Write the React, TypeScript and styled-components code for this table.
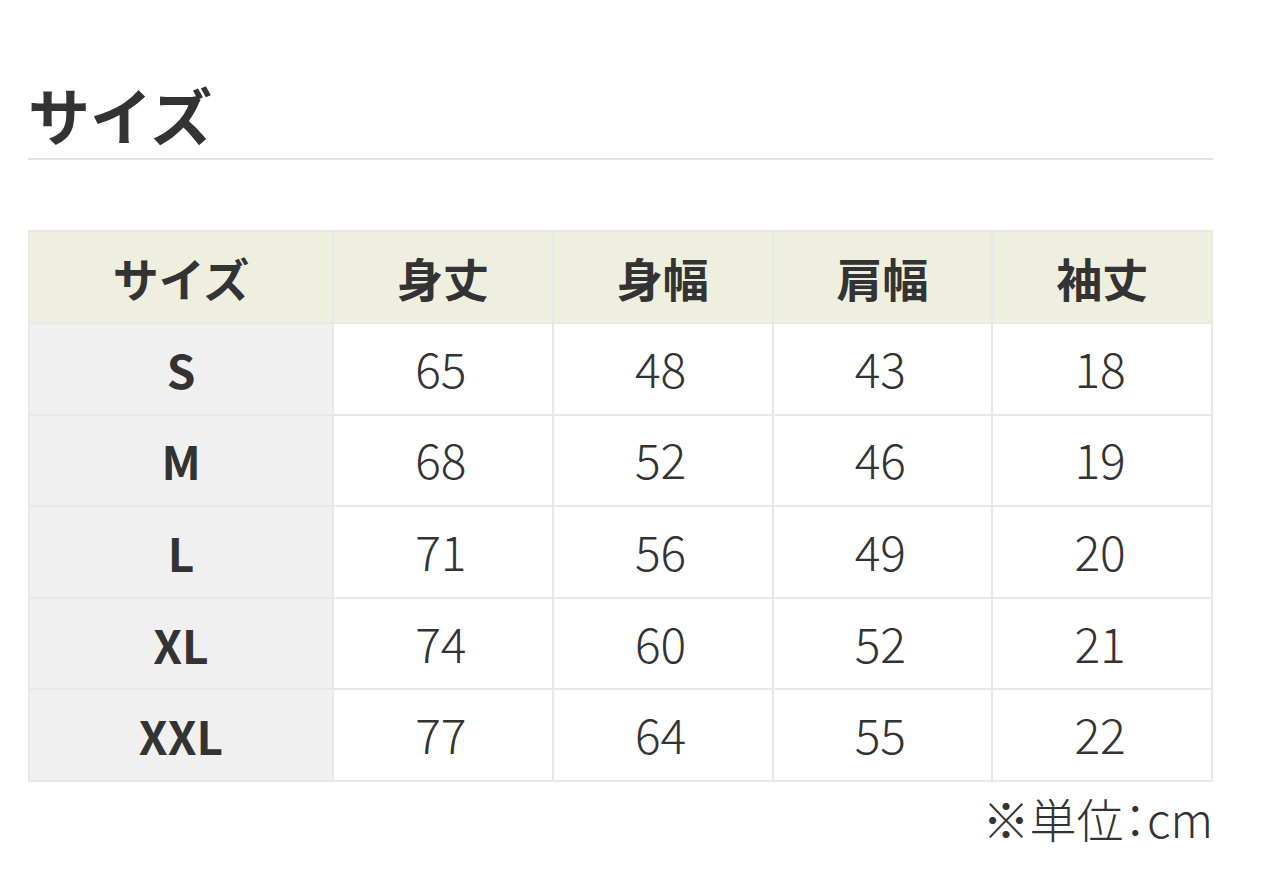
import React from "react";
import styled, { createGlobalStyle } from "styled-components";

const Global = createGlobalStyle`
  html, body { margin: 0; padding: 0; background: #ffffff; }
  body { font-family: "Noto Sans CJK JP", "Noto Sans", sans-serif; color: #333333; }
`;

const Page = styled.div`
  width: 1185px;
  padding: 79px 0 0 28px;
`;

const Heading = styled.h2`
  margin: 0;
  font-size: 62px;
  line-height: 70px;
  font-weight: 700;
  color: #333333;
  padding-bottom: 9px;
  border-bottom: 2px solid #e3e3e3;
`;

const Table = styled.table`
  margin-top: 70px;
  width: 1185px;
  border-collapse: collapse;
  table-layout: fixed;
  border: 2px solid #e8e8e8;
`;

const Row = styled.tr<{ $h: number }>`
  height: ${(p) => p.$h}px;
`;

const HeadCell = styled.th<{ $w?: number }>`
  ${(p) => (p.$w ? `width: ${p.$w}px;` : "")}
  background: #efefe0;
  border: 2px solid #e8e8e8;
  font-size: 46px;
  font-weight: 700;
  color: #333333;
  text-align: center;
  vertical-align: middle;
  padding: 0;
  line-height: 1;
`;

const SizeCell = styled.th`
  background: #f0f0f0;
  border: 2px solid #e8e8e8;
  font-size: 46px;
  font-weight: 700;
  color: #333333;
  text-align: center;
  padding: 0;
  line-height: 1;
`;

const ValueCell = styled.td`
  background: #ffffff;
  border: 2px solid #e8e8e8;
  font-size: 48px;
  font-weight: 300;
  color: #333333;
  text-align: center;
  padding: 0 4px 4px 0;
  line-height: 1;
`;

const Note = styled.p`
  margin: 6px 0 0;
  text-align: right;
  font-size: 47px;
  line-height: 60px;
  font-weight: 300;
  color: #333333;
  font-feature-settings: "palt";
`;

const headers = ["身丈", "身幅", "肩幅", "袖丈"];
const rows: [string, number[]][] = [
  ["S", [65, 48, 43, 18]],
  ["M", [68, 52, 46, 19]],
  ["L", [71, 56, 49, 20]],
  ["XL", [74, 60, 52, 21]],
  ["XXL", [77, 64, 55, 22]],
];

export default function App() {
  return (
    <>
      <Global />
      <Page>
        <Heading>サイズ</Heading>
        <Table>
          <thead>
            <Row $h={92}>
              <HeadCell $w={302}>サイズ</HeadCell>
              {headers.map((h) => (
                <HeadCell key={h}>{h}</HeadCell>
              ))}
            </Row>
          </thead>
          <tbody>
            {rows.map(([size, vals]) => (
              <Row $h={91.6} key={size}>
                <SizeCell>{size}</SizeCell>
                {vals.map((v, i) => (
                  <ValueCell key={i}>{v}</ValueCell>
                ))}
              </Row>
            ))}
          </tbody>
        </Table>
        <Note>※単位：cm</Note>
      </Page>
    </>
  );
}
